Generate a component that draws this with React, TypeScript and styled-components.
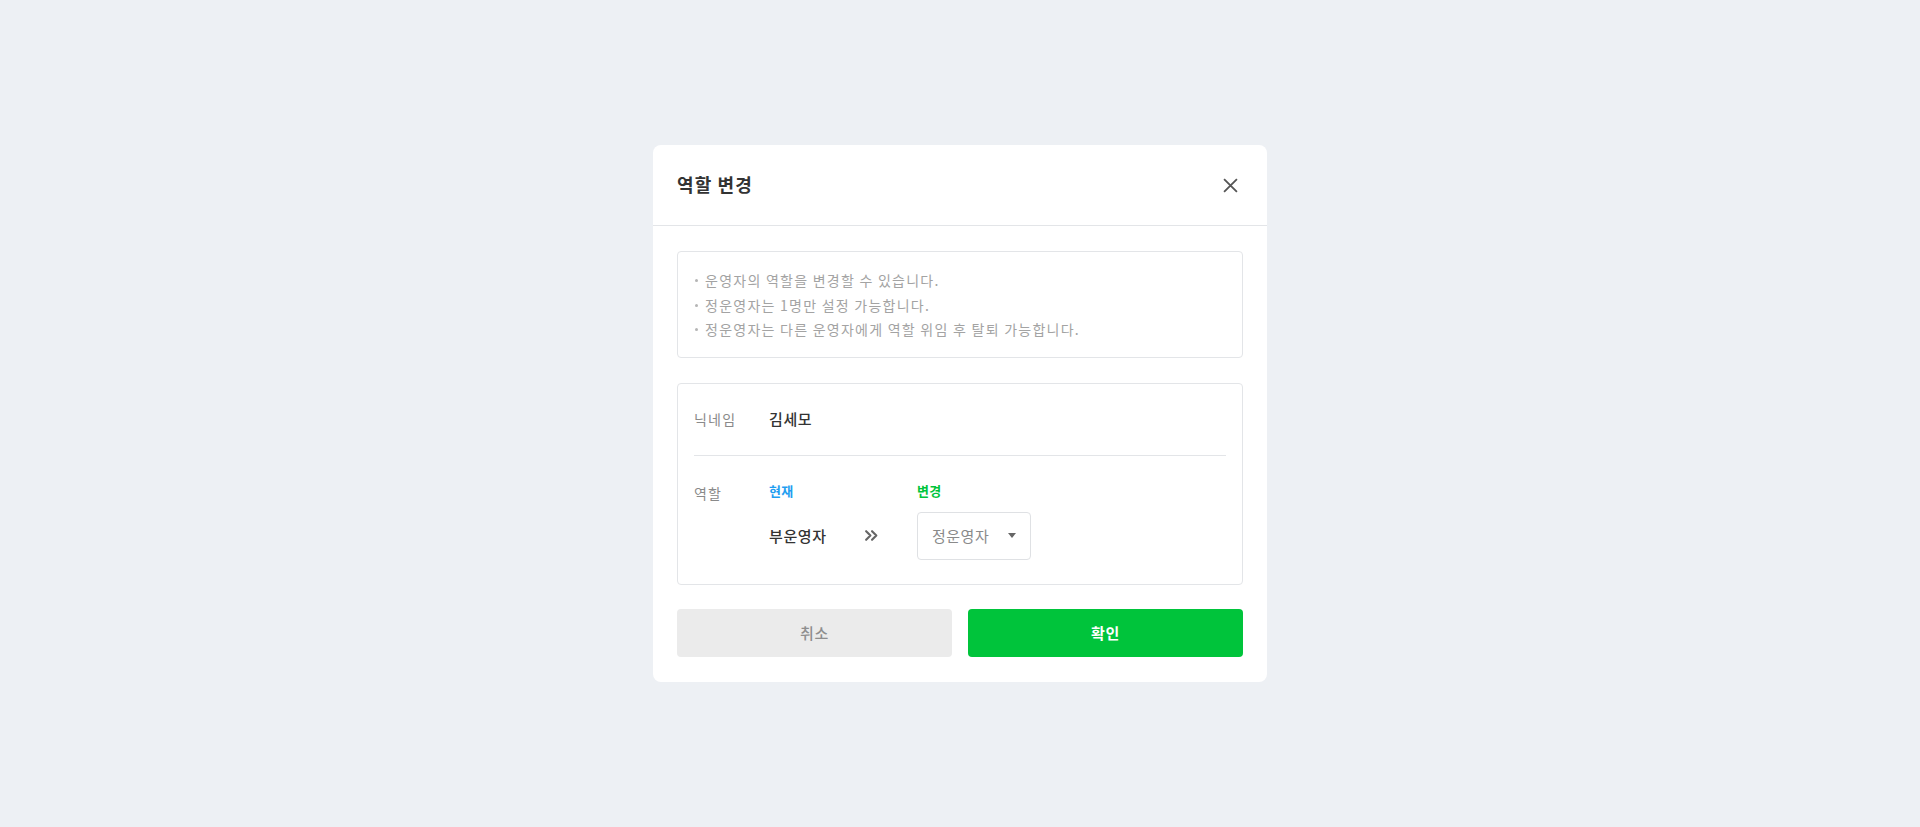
import React from 'react'
import styled, { createGlobalStyle } from 'styled-components'

const GlobalStyle = createGlobalStyle`
  html, body {
    margin: 0;
    padding: 0;
    height: 100%;
  }
  body {
    background: #edf0f4;
    font-family: 'Noto Sans CJK KR', 'Noto Sans', sans-serif;
    color: #333;
  }
  #root {
    height: 100%;
  }
`

const Backdrop = styled.div`
  height: 100vh;
  display: flex;
  align-items: center;
  justify-content: center;
`

const Modal = styled.div`
  width: 614px;
  background: #fff;
  border-radius: 8px;
`

const Header = styled.div`
  height: 80px;
  display: flex;
  align-items: center;
  justify-content: space-between;
  padding: 0 25px 0 24px;
  border-bottom: 1px solid #e3e5e8;
`

const Title = styled.h2`
  margin: -2px 0 0;
  font-size: 18px;
  font-weight: 700;
  letter-spacing: 1.1px;
  color: #333;
`

const CloseButton = styled.button`
  width: 24px;
  height: 24px;
  padding: 0;
  border: 0;
  background: none;
  display: flex;
  align-items: center;
  justify-content: center;
  cursor: pointer;

  svg {
    width: 15px;
    height: 15px;
    stroke: #555;
  }
`

const Body = styled.div`
  padding: 25px 24px 25px;
  display: flex;
  flex-direction: column;
  gap: 25px;
`

const Notice = styled.ul`
  margin: 0;
  list-style: none;
  padding: 16px 16px 15px;
  border: 1px solid #e3e5e8;
  border-radius: 4px;
`

const NoticeItem = styled.li`
  position: relative;
  padding-left: 11px;
  font-size: 14px;
  line-height: 24.5px;
  letter-spacing: 1.25px;
  color: #a3a3a3;

  &::before {
    content: '';
    position: absolute;
    left: 1px;
    top: 11px;
    width: 3px;
    height: 3px;
    border-radius: 50%;
    background: #b5b5b5;
  }
`

const FormBox = styled.div`
  border: 1px solid #e3e5e8;
  border-radius: 4px;
  padding: 0 16px;
`

const Row = styled.div<{ $divider?: boolean }>`
  display: flex;
  align-items: flex-start;
  padding: ${(p) => (p.$divider ? '24px 0 25px' : '26px 0 24px')};
  border-bottom: ${(p) => (p.$divider ? '1px solid #e3e5e8' : 'none')};
`

const Label = styled.div`
  width: 75px;
  flex-shrink: 0;
  font-size: 14px;
  line-height: 22px;
  letter-spacing: 1.2px;
  color: #8a8a8a;
`

const Value = styled.div`
  font-size: 15px;
  line-height: 22px;
  font-weight: 500;
  letter-spacing: 0.6px;
  color: #333;
`

const RoleGrid = styled.div`
  display: grid;
  grid-template-columns: 148px auto;
  grid-template-rows: 20px 48px;
  row-gap: 10px;
`

const RoleCaption = styled.div<{ $color: string }>`
  font-size: 13px;
  line-height: 20px;
  font-weight: 700;
  letter-spacing: 0.3px;
  color: ${(p) => p.$color};
  margin-top: -1px;
`

const CurrentCell = styled.div`
  display: flex;
  align-items: center;
`

const CurrentRole = styled(Value)`
  width: 95px;
`

const Arrow = styled.span`
  display: flex;
  svg {
    width: 15px;
    height: 15px;
    stroke: #666;
  }
`

const Select = styled.div`
  width: 114px;
  height: 48px;
  box-sizing: border-box;
  border: 1px solid #dfe1e4;
  border-radius: 4px;
  padding: 0 14px 0 14px;
  display: flex;
  align-items: center;
  justify-content: space-between;
  font-size: 15px;
  letter-spacing: 0.5px;
  color: #8a8a8a;
  cursor: pointer;
`

const Caret = styled.span`
  width: 0;
  height: 0;
  border-left: 4.5px solid transparent;
  border-right: 4.5px solid transparent;
  border-top: 5px solid #666;
`

const Actions = styled.div`
  display: grid;
  grid-template-columns: 1fr 1fr;
  gap: 16px;
  margin-top: -1px;
`

const Button = styled.button<{ $primary?: boolean }>`
  height: 48px;
  border: 0;
  border-radius: 4px;
  font-family: inherit;
  font-size: 15px;
  letter-spacing: 0.6px;
  font-weight: ${(p) => (p.$primary ? 700 : 500)};
  background: ${(p) => (p.$primary ? '#00c43b' : '#ebebeb')};
  color: ${(p) => (p.$primary ? '#fff' : '#8e8e8e')};
  cursor: pointer;
`

const notices = [
  '운영자의 역할을 변경할 수 있습니다.',
  '정운영자는 1명만 설정 가능합니다.',
  '정운영자는 다른 운영자에게 역할 위임 후 탈퇴 가능합니다.',
]

export default function App() {
  return (
    <>
      <GlobalStyle />
      <Backdrop>
        <Modal>
          <Header>
            <Title>역할 변경</Title>
            <CloseButton aria-label="닫기">
              <svg viewBox="0 0 14 14" fill="none" strokeWidth="1.7">
                <path d="M1 1l12 12M13 1L1 13" />
              </svg>
            </CloseButton>
          </Header>
          <Body>
            <Notice>
              {notices.map((n) => (
                <NoticeItem key={n}>{n}</NoticeItem>
              ))}
            </Notice>
            <FormBox>
              <Row $divider>
                <Label>닉네임</Label>
                <Value>김세모</Value>
              </Row>
              <Row>
                <Label>역할</Label>
                <RoleGrid>
                  <RoleCaption $color="#1f9ef0">현재</RoleCaption>
                  <RoleCaption $color="#00c43b">변경</RoleCaption>
                  <CurrentCell>
                    <CurrentRole>부운영자</CurrentRole>
                    <Arrow>
                      <svg viewBox="0 0 14 14" fill="none" strokeWidth="2" strokeLinecap="round" strokeLinejoin="round">
                        <path d="M2 3l4 4-4 4M7.5 3l4 4-4 4" />
                      </svg>
                    </Arrow>
                  </CurrentCell>
                  <Select>
                    정운영자
                    <Caret />
                  </Select>
                </RoleGrid>
              </Row>
            </FormBox>
            <Actions>
              <Button>취소</Button>
              <Button $primary>확인</Button>
            </Actions>
          </Body>
        </Modal>
      </Backdrop>
    </>
  )
}
